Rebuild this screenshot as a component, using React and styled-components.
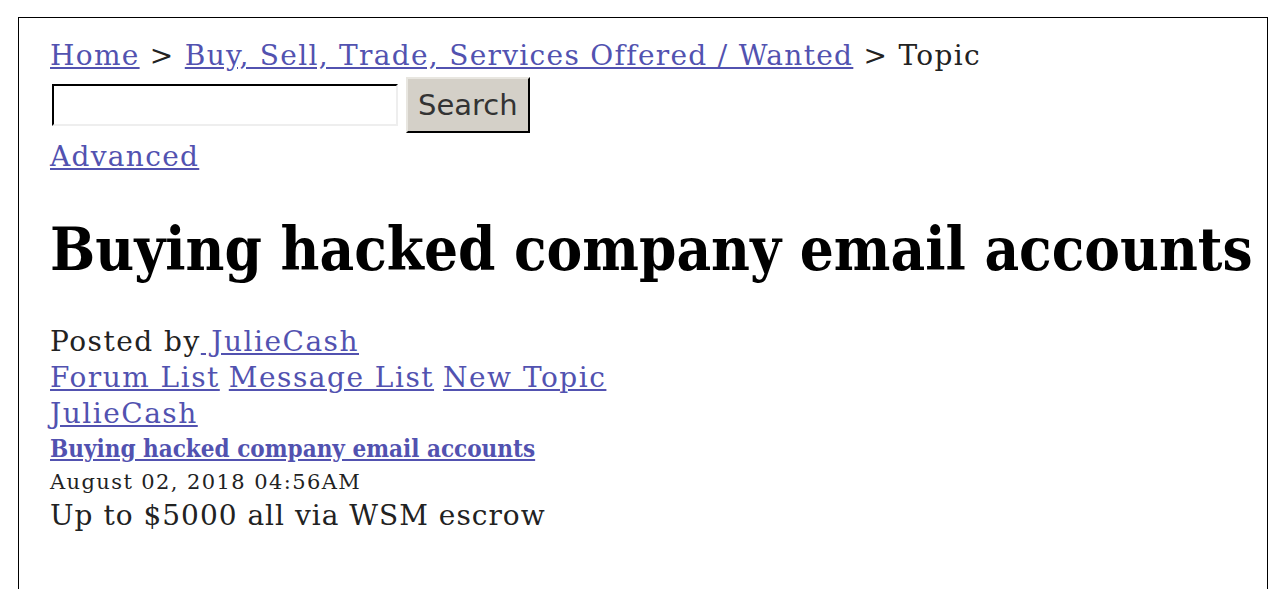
import styled, { createGlobalStyle } from "styled-components";

const GlobalStyle = createGlobalStyle`
  html, body {
    margin: 0;
    padding: 0;
    background: #fff;
  }
`;

const Page = styled.div`
  padding: 17px 14px 0 18px;
  height: 589px;
  box-sizing: border-box;
  overflow: hidden;
`;

const Frame = styled.div`
  border: 1px solid #000;
  border-bottom: none;
  height: 100%;
  box-sizing: border-box;
  padding: 20px 0 0 31px;
  font-family: "DejaVu Serif", serif;
  font-size: 28px;
  letter-spacing: 1.3px;
  line-height: 36px;
  color: #222;
`;

const Link = styled.a`
  color: #5252b0;
  text-decoration: underline;
  font-weight: ${({ $bold }) => ($bold ? "bold" : "normal")};
`;

const Crumbs = styled.div`
  white-space: nowrap;
`;

const SearchRow = styled.form`
  display: flex;
  align-items: center;
  gap: 8px;
  margin: 3px 0 6px 2px;
`;

const SearchInput = styled.input`
  width: 340px;
  height: 36px;
  border: 2px inset #eee;
  border-top-color: #444;
  border-left-color: #444;
  box-sizing: content-box;
  padding: 1px;
  background: #fff;
`;

const SearchButton = styled.button`
  font-family: "DejaVu Sans", sans-serif;
  font-size: 29px;
  letter-spacing: 0;
  color: #333;
  background: #d4d0c8;
  height: 56px;
  padding: 0 10px;
  border: 2px outset #e8e6e0;
  border-right-color: #333;
  border-bottom-color: #333;
`;

const Heading = styled.h1`
  margin: 39px 0 40px;
  font-family: "DejaVu Serif Condensed", "DejaVu Serif", serif;
  font-stretch: condensed;
  font-size: 59.5px;
  letter-spacing: 0;
  line-height: 70px;
  font-weight: bold;
  color: #000;
  white-space: nowrap;
`;

const Line = styled.div`
  white-space: nowrap;
  letter-spacing: ${({ $spacing }) => $spacing || "1.5px"};
`;

const LinkRow = styled.div`
  display: flex;
  gap: 9px;
  letter-spacing: 1.5px;
`;

const Subject = styled.div`
  font-family: "DejaVu Serif Condensed", "DejaVu Serif", serif;
  font-stretch: condensed;
  font-size: 24px;
  letter-spacing: 0;
  line-height: 34px;
`;

const DateLine = styled.div`
  font-size: 21px;
  letter-spacing: 1.4px;
  line-height: 32px;
`;

export default function App() {
  return (
    <>
      <GlobalStyle />
      <Page>
        <Frame>
          <Crumbs>
            <Link href="#">Home</Link> &gt;{" "}
            <Link href="#">Buy, Sell, Trade, Services Offered / Wanted</Link> &gt; Topic
          </Crumbs>
          <SearchRow onSubmit={(e) => e.preventDefault()}>
            <SearchInput type="text" />
            <SearchButton type="submit">Search</SearchButton>
          </SearchRow>
          <Line $spacing="1.3px">
            <Link href="#">Advanced</Link>
          </Line>
          <Heading>Buying hacked company email accounts</Heading>
          <Line>
            Posted by<Link href="#"> JulieCash</Link>
          </Line>
          <LinkRow>
            <Link href="#">Forum List</Link>
            <Link href="#">Message List</Link>
            <Link href="#">New Topic</Link>
          </LinkRow>
          <Line>
            <Link href="#">JulieCash</Link>
          </Line>
          <Subject>
            <Link href="#" $bold>
              Buying hacked company email accounts
            </Link>
          </Subject>
          <DateLine>August 02, 2018 04:56AM</DateLine>
          <Line $spacing="1px">Up to $5000 all via WSM escrow</Line>
        </Frame>
      </Page>
    </>
  );
}
